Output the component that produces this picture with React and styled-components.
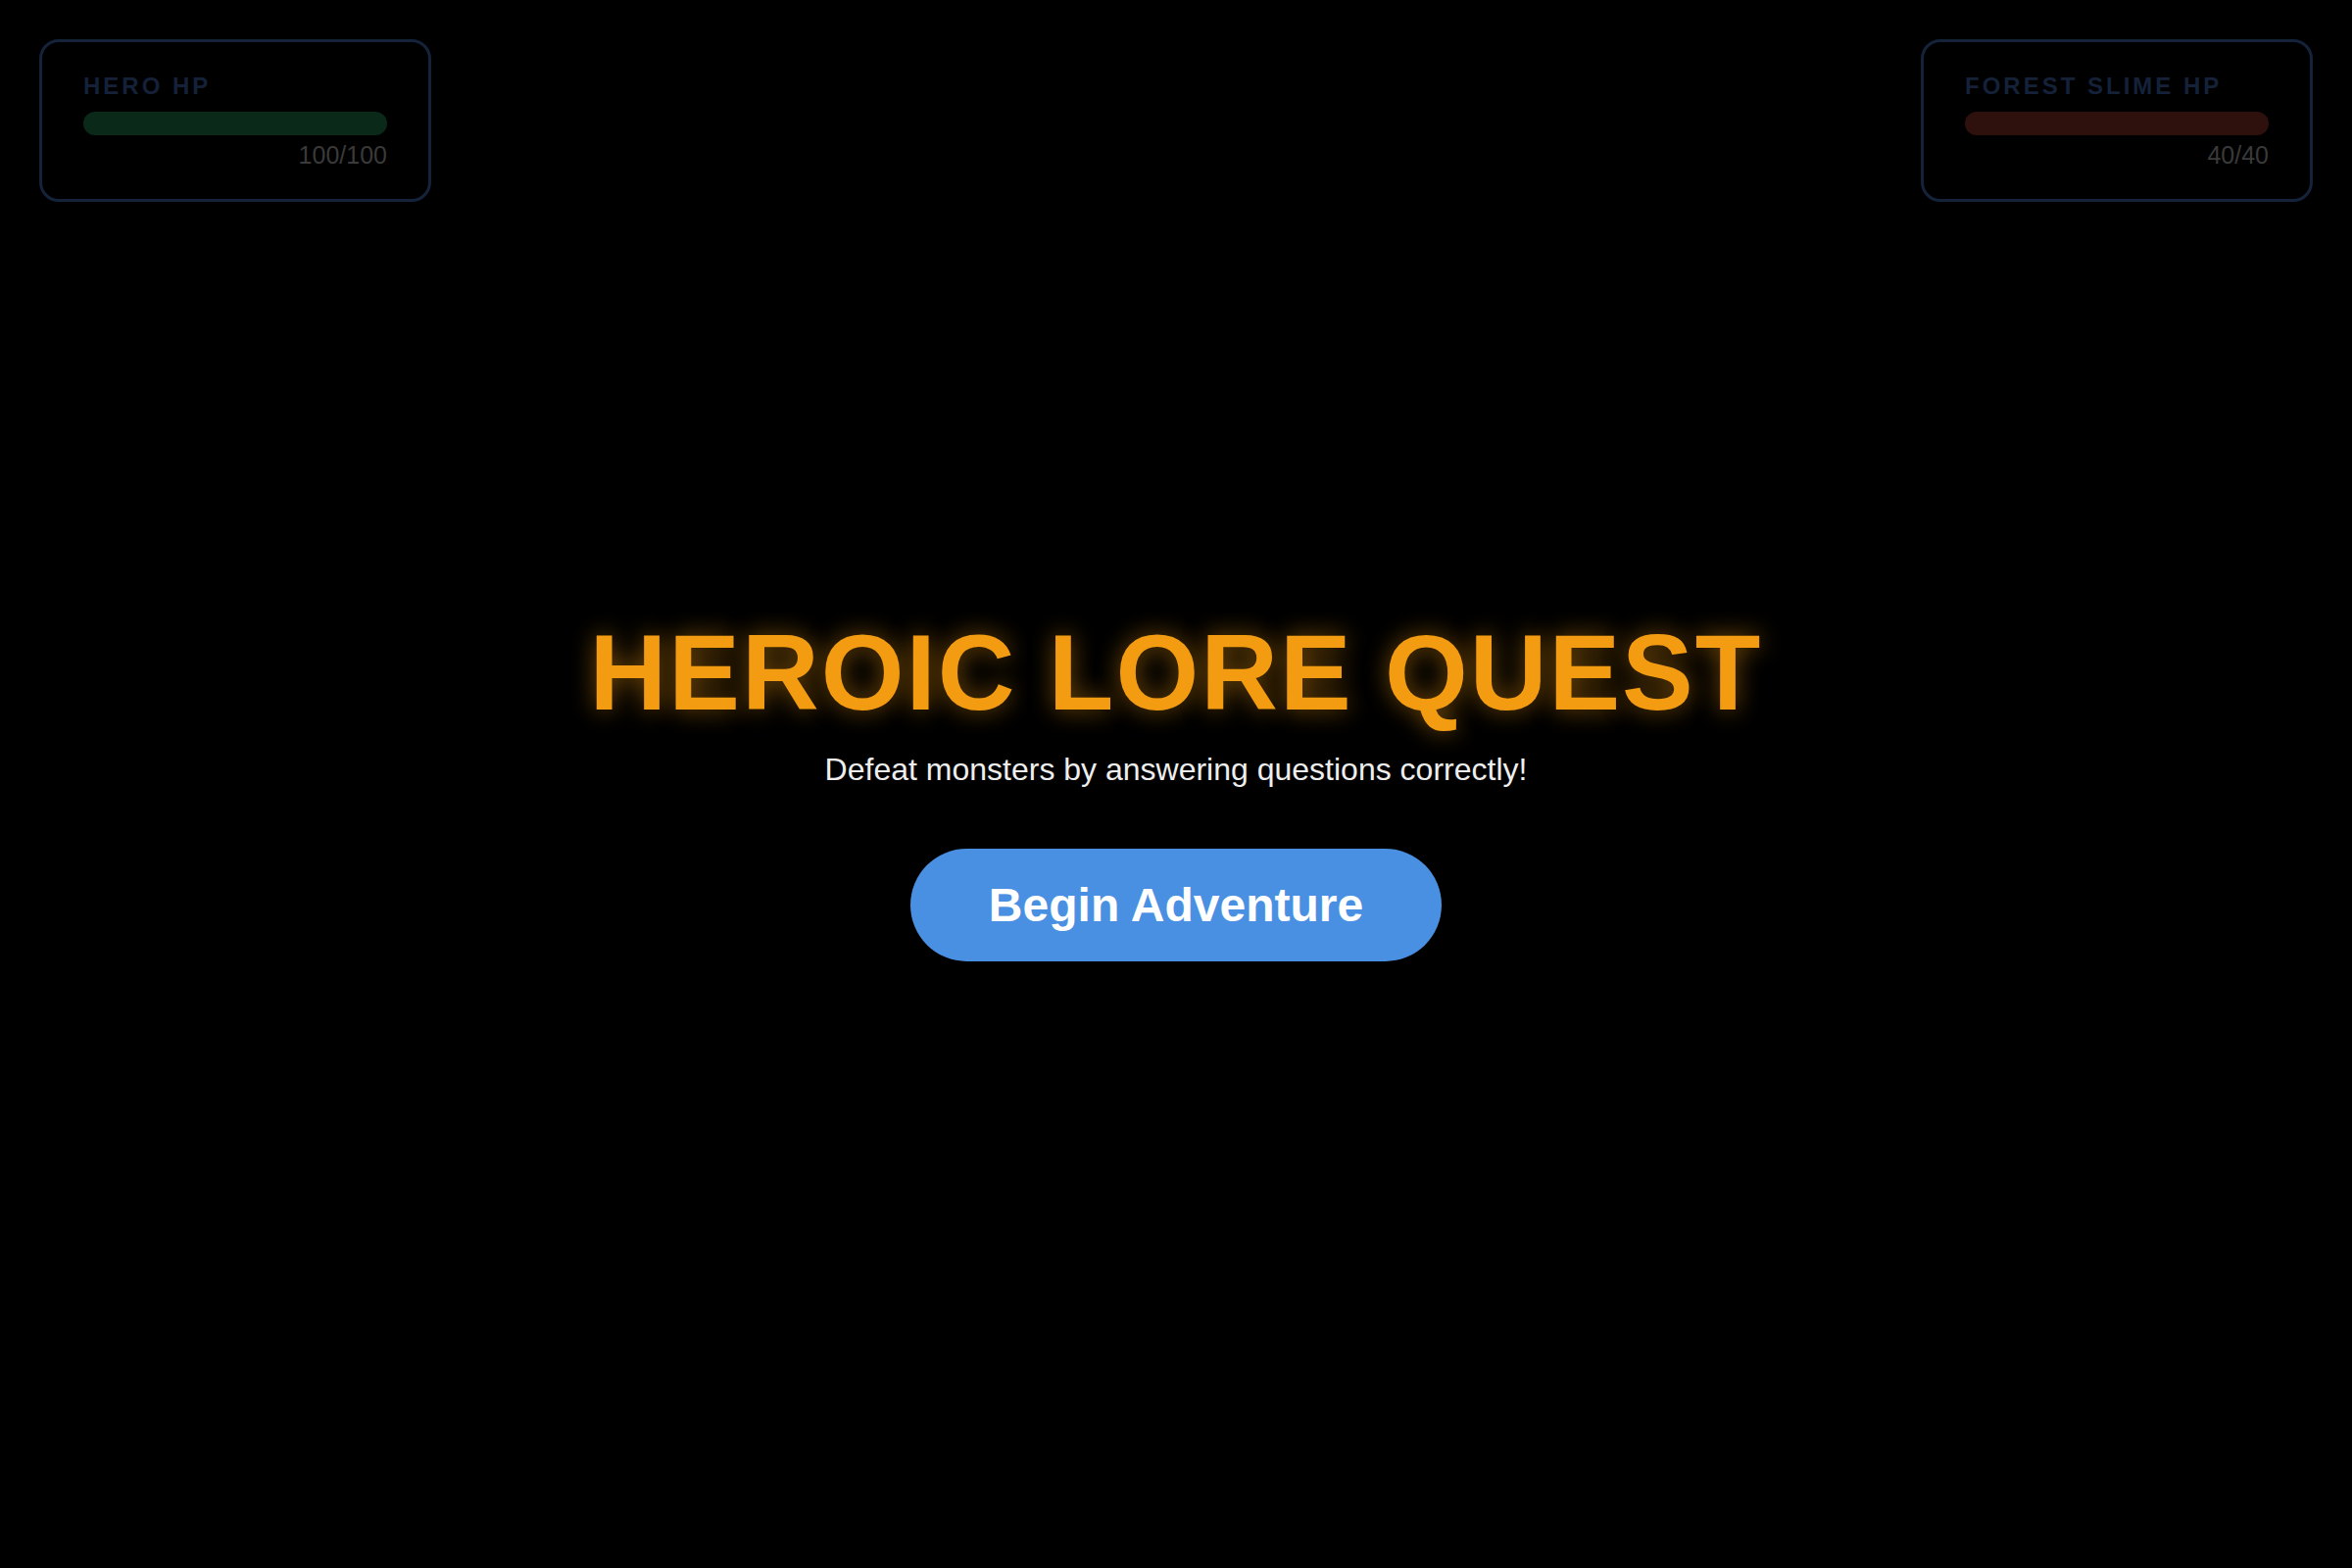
import React from "react";
import styled, { createGlobalStyle } from "styled-components";

const GlobalStyle = createGlobalStyle`
  html, body {
    margin: 0;
    padding: 0;
    background: #000;
  }
  body {
    font-family: "Liberation Sans", Arial, sans-serif;
  }
  #root {
    min-height: 100vh;
  }
`;

const Screen = styled.div`
  position: relative;
  width: 100%;
  height: 100vh;
  background: #000;
  overflow: hidden;
`;

const Hud = styled.div`
  display: flex;
  justify-content: space-between;
  padding: 40px;
`;

const HpCard = styled.div`
  box-sizing: border-box;
  width: 400px;
  padding: 31px 42px 30px 42px;
  border: 3px solid #14233a;
  border-radius: 20px;
  display: flex;
  flex-direction: column;
`;

const HpLabel = styled.div`
  font-size: 24px;
  font-weight: 700;
  letter-spacing: 3px;
  text-transform: uppercase;
  color: #142139;
`;

const HpTrack = styled.div`
  margin-top: 12px;
  height: 24px;
  border-radius: 12px;
  background: ${(p) => p.$color};
  overflow: hidden;
`;

const HpValue = styled.div`
  margin-top: 6px;
  text-align: right;
  font-size: 25px;
  color: #3a3a3a;
`;

const Overlay = styled.div`
  position: absolute;
  inset: 0;
  display: flex;
  flex-direction: column;
  align-items: center;
  justify-content: center;
`;

const Title = styled.h1`
  margin: 3px 0 18px;
  font-size: 109px;
  font-weight: 700;
  letter-spacing: 2px;
  color: #f39c12;
  text-shadow: 0 0 24px rgba(243, 156, 18, 0.5);
`;

const Subtitle = styled.p`
  margin: 0 0 62px;
  font-size: 32px;
  color: #eeeeee;
`;

const StartButton = styled.button`
  font-family: "Liberation Sans", Arial, sans-serif;
  font-size: 48px;
  font-weight: 700;
  color: #fff;
  background: #4a90e2;
  border: none;
  border-radius: 999px;
  padding: 30px 80px;
  cursor: pointer;
`;

function HpPanel({ label, value, max, color }) {
  return (
    <HpCard>
      <HpLabel>{label}</HpLabel>
      <HpTrack $color={color} />
      <HpValue>
        {value}/{max}
      </HpValue>
    </HpCard>
  );
}

export default function App() {
  return (
    <>
      <GlobalStyle />
      <Screen>
        <Hud>
          <HpPanel label="Hero HP" value={100} max={100} color="#0a2918" />
          <HpPanel label="Forest Slime HP" value={40} max={40} color="#2e100d" />
        </Hud>
        <Overlay>
          <Title>HEROIC LORE QUEST</Title>
          <Subtitle>Defeat monsters by answering questions correctly!</Subtitle>
          <StartButton>Begin Adventure</StartButton>
        </Overlay>
      </Screen>
    </>
  );
}
